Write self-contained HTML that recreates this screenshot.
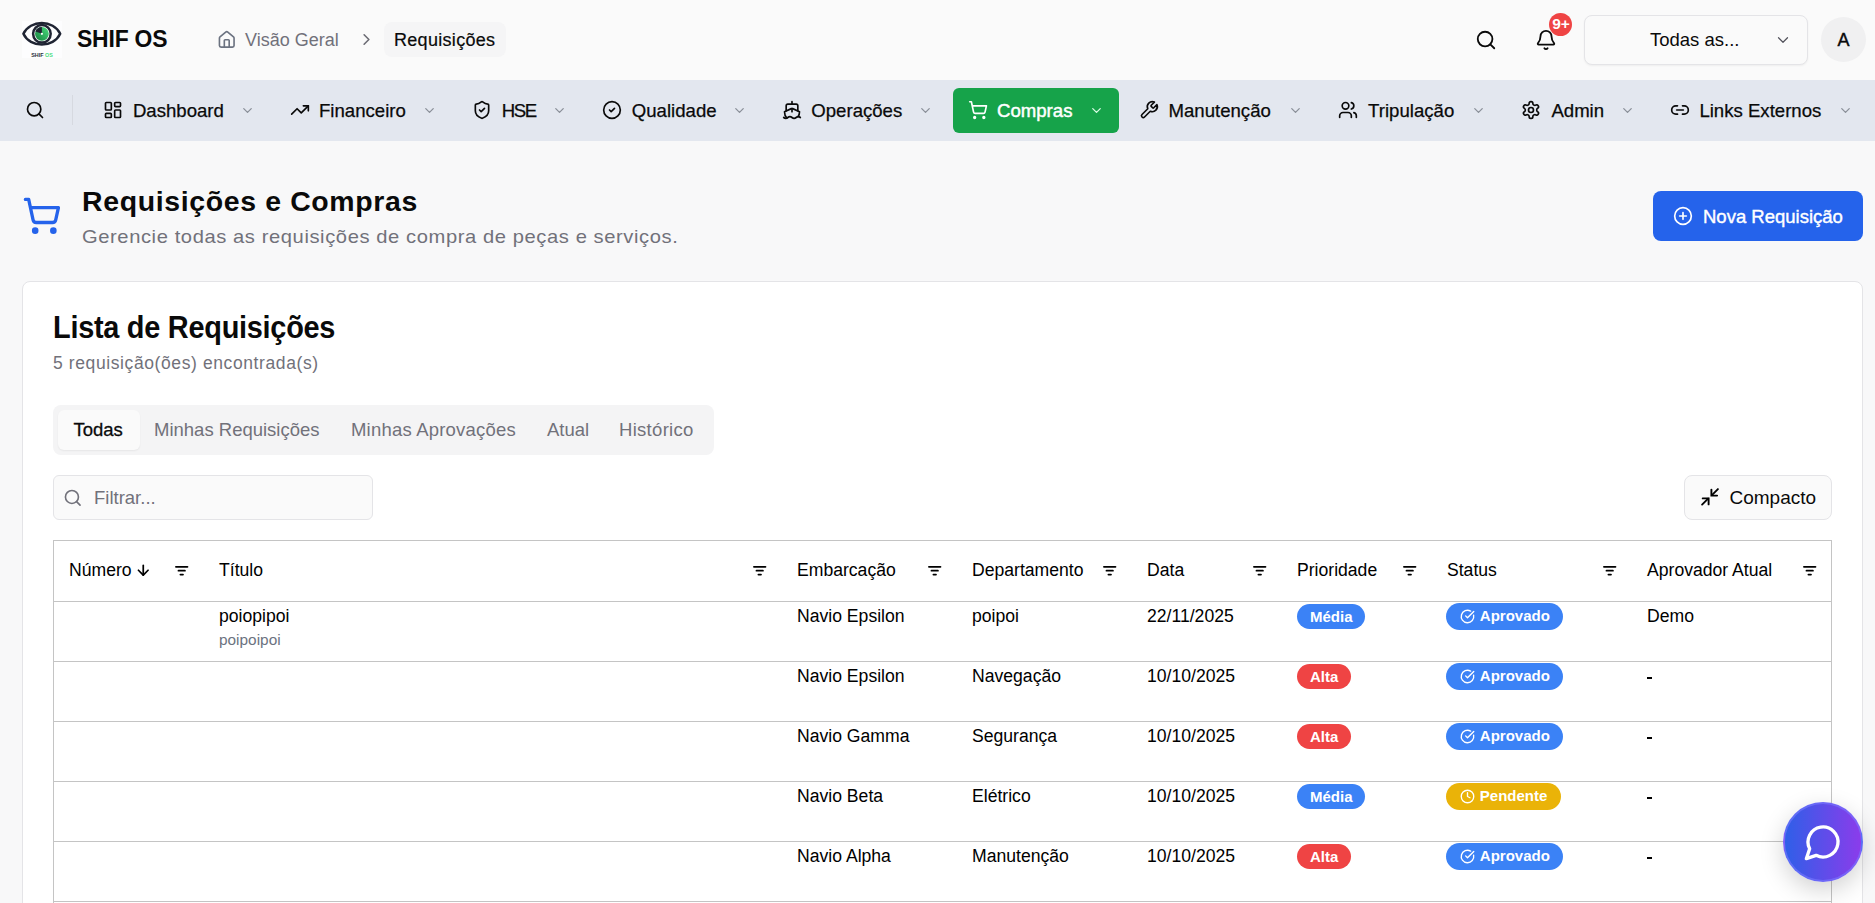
<!DOCTYPE html>
<html><head><meta charset="utf-8">
<style>
*{box-sizing:border-box;margin:0;padding:0}
html,body{width:1875px;height:903px;overflow:hidden;background:#f8f8f9;font-family:"Liberation Sans",sans-serif;color:#0a0a0a}
.a{position:absolute}
.t{position:absolute;white-space:nowrap;line-height:1}
svg{position:absolute;display:block;overflow:visible}
.ic{fill:none;stroke:#0a0a0a;stroke-width:2;stroke-linecap:round;stroke-linejoin:round}
.nav .t{font-size:18.6px;-webkit-text-stroke:0.25px #0a0a0a;color:#0a0a0a;top:101.5px}
.chev{fill:none;stroke:#8a8f98;stroke-width:2;stroke-linecap:round;stroke-linejoin:round}
.th{font-size:17.6px;color:#000}
.td{font-size:17.6px;color:#000}
.fl{fill:#000}
.badge{position:absolute;border-radius:14px;color:#fff;font-weight:700;font-size:15px;line-height:1}
</style></head><body>
<!-- HEADER -->
<div class="a" style="left:0;top:0;width:1875px;height:80px;background:#fafafa"></div>
<!-- logo -->
<div class="a" style="left:22px;top:21px;width:40px;height:37px;background:#fdfdfe"></div>
<svg style="left:22px;top:21px" width="40" height="37" viewBox="0 0 40 37">
  <defs><linearGradient id="gg" x1="1" y1="0" x2="0" y2="1"><stop offset="0" stop-color="#4ade80"/><stop offset="1" stop-color="#15803d"/></linearGradient></defs>
  <path d="M1.4 12.8 C8 -1.5 31.6 -1.5 38.2 12.8 C31.6 27.1 8 27.1 1.4 12.8 Z" fill="none" stroke="#1f2433" stroke-width="2.5" stroke-linejoin="round"/>
  <circle cx="19.9" cy="12.8" r="8.8" fill="none" stroke="#1f2433" stroke-width="2.5"/>
  <circle cx="19.9" cy="12.8" r="6.9" fill="url(#gg)"/>
  <path d="M19.9 12.8 L19.9 5.9 A6.9 6.9 0 0 0 13.4 10.4 Z" fill="#1f2433"/>
  <circle cx="19.9" cy="12.8" r="1.1" fill="#fff"/>
  <text x="9.2" y="35.8" font-family="Liberation Sans" font-weight="700" font-size="5.4" fill="#2a2f3a">SHIF <tspan fill="#4ade80">OS</tspan></text>
</svg>
<div class="t" style="left:76.5px;top:27.2px;font-size:24.5px;font-weight:700;letter-spacing:-0.2px;transform:scaleX(0.935);transform-origin:0 0">SHIF OS</div>
<!-- breadcrumb -->
<svg class="ic" style="left:217px;top:29.5px;stroke:#6b7280;stroke-width:2" width="19.5" height="19.5" viewBox="0 0 24 24"><path d="M15 21v-8a1 1 0 0 0-1-1h-4a1 1 0 0 0-1 1v8"/><path d="M3 10a2 2 0 0 1 .709-1.528l7-5.999a2 2 0 0 1 2.582 0l7 5.999A2 2 0 0 1 21 10v9a2 2 0 0 1-2 2H5a2 2 0 0 1-2-2z"/></svg>
<div class="t" style="left:245px;top:30.5px;font-size:18px;color:#71717a">Visão Geral</div>
<svg class="ic" style="left:357px;top:30px;stroke:#6b6b73" width="19" height="19" viewBox="0 0 24 24"><path d="m9 18 6-6-6-6"/></svg>
<div class="a" style="left:383.5px;top:22px;width:122px;height:35px;border-radius:8px;background:#f5f5f6"></div>
<div class="t" style="left:394px;top:30.5px;font-size:18px;color:#0a0a0a;letter-spacing:0.3px;-webkit-text-stroke:0.2px #0a0a0a">Requisições</div>
<!-- right header -->
<svg class="ic" style="left:1475px;top:29px" width="22" height="22" viewBox="0 0 24 24"><circle cx="11" cy="11" r="8"/><path d="m21 21-4.3-4.3"/></svg>
<svg class="ic" style="left:1535px;top:29px" width="22" height="22" viewBox="0 0 24 24"><path d="M10.268 21a2 2 0 0 0 3.464 0"/><path d="M3.262 15.326A1 1 0 0 0 4 17h16a1 1 0 0 0 .74-1.673C19.41 13.956 18 12.499 18 8A6 6 0 0 0 6 8c0 4.499-1.411 5.956-2.738 7.326"/></svg>
<div class="a" style="left:1549px;top:13px;width:23px;height:23px;border-radius:50%;background:#ef4444"></div>
<div class="t" style="left:1549.5px;top:16px;width:23px;text-align:center;font-size:15.5px;font-weight:700;color:#fff">9+</div>
<div class="a" style="left:1583.5px;top:15px;width:224px;height:50px;border-radius:8px;background:#fafafa;border:1px solid #e4e4e7;box-shadow:0 1px 2px rgba(0,0,0,0.05)"></div>
<div class="t" style="left:1650px;top:31px;font-size:18.5px">Todas as...</div>
<svg class="chev" style="left:1774px;top:31px;stroke:#52525b;stroke-width:1.6" width="18" height="18" viewBox="0 0 24 24"><path d="m6 9 6 6 6-6"/></svg>
<div class="a" style="left:1821px;top:17px;width:45px;height:45px;border-radius:50%;background:#f0f0f1"></div>
<div class="t" style="left:1821px;top:31px;width:45px;text-align:center;font-size:18px;-webkit-text-stroke:0.4px #0a0a0a">A</div>

<!-- NAV -->
<div class="a nav" style="left:0;top:79.5px;width:1875px;height:61px;background:#e3e7ef">
</div>
<div class="nav">
<svg class="ic" style="left:25px;top:100px" width="20" height="20" viewBox="0 0 24 24"><circle cx="11" cy="11" r="8"/><path d="m21 21-4.3-4.3"/></svg>
<div class="a" style="left:72px;top:95px;width:1px;height:30px;background:#d6d9e0"></div>
<svg class="ic" style="left:102.90px;top:100px;" width="20" height="20" viewBox="0 0 24 24"><rect width="7" height="9" x="3" y="3" rx="1"/><rect width="7" height="5" x="14" y="3" rx="1"/><rect width="7" height="9" x="14" y="12" rx="1"/><rect width="7" height="5" x="3" y="16" rx="1"/></svg>
<div class="t" style="left:132.9px;">Dashboard</div>
<svg class="chev" style="left:239.95px;top:102.9px;" width="15" height="15" viewBox="0 0 24 24"><path d="m6 9 6 6 6-6"/></svg>
<svg class="ic" style="left:289.85px;top:100px;" width="20" height="20" viewBox="0 0 24 24"><polyline points="22 7 13.5 15.5 8.5 10.5 2 17"/><polyline points="16 7 22 7 22 13"/></svg>
<div class="t" style="left:319.0px;">Financeiro</div>
<svg class="chev" style="left:422.00px;top:102.9px;" width="15" height="15" viewBox="0 0 24 24"><path d="m6 9 6 6 6-6"/></svg>
<svg class="ic" style="left:471.90px;top:100px;" width="20" height="20" viewBox="0 0 24 24"><path d="M20 13c0 5-3.5 7.5-7.66 8.95a1 1 0 0 1-.67-.01C7.5 20.5 4 18 4 13V6a1 1 0 0 1 1-1c2 0 4.5-1.2 6.24-2.72a1.17 1.17 0 0 1 1.52 0C14.51 3.81 17 5 19 5a1 1 0 0 1 1 1z"/><path d="m9 12 2 2 4-4"/></svg>
<div class="t" style="left:501.8px;letter-spacing:-1.4px">HSE</div>
<svg class="chev" style="left:552.00px;top:102.9px;" width="15" height="15" viewBox="0 0 24 24"><path d="m6 9 6 6 6-6"/></svg>
<svg class="ic" style="left:602.00px;top:100px;" width="20" height="20" viewBox="0 0 24 24"><circle cx="12" cy="12" r="10"/><path d="m9 12 2 2 4-4"/></svg>
<div class="t" style="left:631.8px;">Qualidade</div>
<svg class="chev" style="left:732.40px;top:102.9px;" width="15" height="15" viewBox="0 0 24 24"><path d="m6 9 6 6 6-6"/></svg>
<svg class="ic" style="left:782.25px;top:100px;" width="20" height="20" viewBox="0 0 24 24"><path d="M12 10.189V14"/><path d="M12 2v3"/><path d="M19 13V7a2 2 0 0 0-2-2H7a2 2 0 0 0-2 2v6"/><path d="M19.38 20A11.6 11.6 0 0 0 21 14l-8.188-3.639a2 2 0 0 0-1.624 0L3 14a11.6 11.6 0 0 0 2.81 7.76"/><path d="M2 21c.6.5 1.2 1 2.5 1 2.5 0 2.5-2 5-2 1.3 0 1.9.5 2.5 1s1.2 1 2.5 1c2.5 0 2.5-2 5-2 1.3 0 1.9.5 2.5 1"/></svg>
<div class="t" style="left:811.3px;">Operações</div>
<svg class="chev" style="left:918.20px;top:102.9px;" width="15" height="15" viewBox="0 0 24 24"><path d="m6 9 6 6 6-6"/></svg>
<div class="a" style="left:953px;top:88px;width:166px;height:44.5px;border-radius:6px;background:#16a34a"></div>
<svg class="ic" style="left:968.20px;top:100px;stroke:#fff;" width="20" height="20" viewBox="0 0 24 24"><circle cx="8" cy="21" r="1"/><circle cx="19" cy="21" r="1"/><path d="M2.05 2.05h2l2.66 12.42a2 2 0 0 0 2 1.58h9.78a2 2 0 0 0 1.95-1.57l1.65-7.430H5.12"/></svg>
<div class="t" style="left:997.0px;color:#fff;-webkit-text-stroke:0.45px #fff;">Compras</div>
<svg class="chev" style="left:1089.25px;top:102.9px;stroke:#dcfce7;" width="15" height="15" viewBox="0 0 24 24"><path d="m6 9 6 6 6-6"/></svg>
<svg class="ic" style="left:1139.45px;top:100px;" width="20" height="20" viewBox="0 0 24 24"><path d="M14.7 6.3a1 1 0 0 0 0 1.4l1.6 1.6a1 1 0 0 0 1.4 0l3.77-3.77a6 6 0 0 1-7.94 7.94l-6.91 6.91a2.12 2.12 0 0 1-3-3l6.91-6.91a6 6 0 0 1 7.94-7.94l-3.76 3.76z"/></svg>
<div class="t" style="left:1168.5px;">Manutenção</div>
<svg class="chev" style="left:1287.95px;top:102.9px;" width="15" height="15" viewBox="0 0 24 24"><path d="m6 9 6 6 6-6"/></svg>
<svg class="ic" style="left:1338.05px;top:100px;" width="20" height="20" viewBox="0 0 24 24"><path d="M16 21v-2a4 4 0 0 0-4-4H6a4 4 0 0 0-4 4v2"/><circle cx="9" cy="7" r="4"/><path d="M22 21v-2a4 4 0 0 0-3-3.87"/><path d="M16 3.13a4 4 0 0 1 0 7.75"/></svg>
<div class="t" style="left:1368.1px;">Tripulação</div>
<svg class="chev" style="left:1471.25px;top:102.9px;" width="15" height="15" viewBox="0 0 24 24"><path d="m6 9 6 6 6-6"/></svg>
<svg class="ic" style="left:1520.80px;top:100px;" width="20" height="20" viewBox="0 0 24 24"><path d="M12.22 2h-.44a2 2 0 0 0-2 2v.18a2 2 0 0 1-1 1.73l-.43.25a2 2 0 0 1-2 0l-.15-.08a2 2 0 0 0-2.73.73l-.22.38a2 2 0 0 0 .73 2.73l.15.1a2 2 0 0 1 1 1.72v.51a2 2 0 0 1-1 1.74l-.15.09a2 2 0 0 0-.73 2.73l.22.38a2 2 0 0 0 2.73.73l.15-.08a2 2 0 0 1 2 0l.43.25a2 2 0 0 1 1 1.73V20a2 2 0 0 0 2 2h.44a2 2 0 0 0 2-2v-.18a2 2 0 0 1 1-1.73l.43-.25a2 2 0 0 1 2 0l.15.08a2 2 0 0 0 2.73-.73l.22-.39a2 2 0 0 0-.73-2.73l-.15-.08a2 2 0 0 1-1-1.74v-.5a2 2 0 0 1 1-1.74l.15-.09a2 2 0 0 0 .73-2.73l-.22-.38a2 2 0 0 0-2.73-.73l-.15.08a2 2 0 0 1-2 0l-.43-.25a2 2 0 0 1-1-1.73V4a2 2 0 0 0-2-2z"/><circle cx="12" cy="12" r="3"/></svg>
<div class="t" style="left:1551.4px;">Admin</div>
<svg class="chev" style="left:1620.00px;top:102.9px;" width="15" height="15" viewBox="0 0 24 24"><path d="m6 9 6 6 6-6"/></svg>
<svg class="ic" style="left:1670.00px;top:100px;" width="20" height="20" viewBox="0 0 24 24"><path d="M9 17H7A5 5 0 0 1 7 7h2"/><path d="M15 7h2a5 5 0 1 1 0 10h-2"/><line x1="8" x2="16" y1="12" y2="12"/></svg>
<div class="t" style="left:1699.4px;">Links Externos</div>
<svg class="chev" style="left:1838.00px;top:102.9px;" width="15" height="15" viewBox="0 0 24 24"><path d="m6 9 6 6 6-6"/></svg>
</div>

<!-- PAGE HEADER -->
<svg class="ic" style="left:22.3px;top:195.8px;stroke:#2563eb;stroke-width:2" width="39.6" height="39.6" viewBox="0 0 24 24"><circle cx="8" cy="21" r="1"/><circle cx="19" cy="21" r="1"/><path d="M2.05 2.05h2l2.66 12.42a2 2 0 0 0 2 1.58h9.78a2 2 0 0 0 1.95-1.57l1.65-7.43H5.12"/></svg>
<div class="t" style="left:81.5px;top:188.5px;font-size:27px;font-weight:700;letter-spacing:0.6px;transform:scaleX(1.054);transform-origin:0 0">Requisições e Compras</div>
<div class="t" style="left:82px;top:226.5px;font-size:19px;color:#71717a;letter-spacing:0.55px;transform:scaleX(1.061);transform-origin:0 0">Gerencie todas as requisições de compra de peças e serviços.</div>

<div class="a" style="left:1653px;top:191px;width:210px;height:50px;border-radius:8px;background:#2563eb"></div>
<svg class="ic" style="left:1672.8px;top:206px;stroke:#fff;stroke-width:2" width="20" height="20" viewBox="0 0 24 24"><circle cx="12" cy="12" r="10"/><path d="M8 12h8"/><path d="M12 8v8"/></svg>
<div class="t" style="left:1703px;top:208px;font-size:18.5px;color:#fff;-webkit-text-stroke:0.4px #fff">Nova Requisição</div>

<!-- CARD -->
<div class="a" style="left:22px;top:281px;width:1841px;height:700px;border-radius:8px;background:#fff;border:1px solid #e4e4e7"></div>
<div class="t" style="left:52.5px;top:312px;font-size:31.5px;font-weight:700;letter-spacing:-0.3px;transform:scaleX(0.918);transform-origin:0 0">Lista de Requisições</div>
<div class="t" style="left:53px;top:355px;font-size:17.5px;color:#71717a;letter-spacing:0.6px">5 requisição(ões) encontrada(s)</div>

<!-- tabs -->
<div class="a" style="left:53px;top:404.5px;width:661px;height:50.5px;border-radius:8px;background:#f4f4f5"></div>
<div class="a" style="left:57.5px;top:409.5px;width:82px;height:40px;border-radius:6px;background:#fafafa;box-shadow:0 1px 2px rgba(0,0,0,0.06)"></div>
<div class="t" style="left:73.5px;top:420.5px;font-size:18.5px;-webkit-text-stroke:0.3px #0a0a0a">Todas</div>
<div class="t" style="left:154px;top:420.5px;font-size:18.5px;color:#71717a">Minhas Requisições</div>
<div class="t" style="left:351px;top:420.5px;font-size:18.5px;color:#71717a;letter-spacing:0.2px">Minhas Aprovações</div>
<div class="t" style="left:547px;top:420.5px;font-size:18.5px;color:#71717a">Atual</div>
<div class="t" style="left:619px;top:420.5px;font-size:18.5px;color:#71717a;letter-spacing:0.3px">Histórico</div>

<!-- filter -->
<div class="a" style="left:53px;top:475px;width:320px;height:45px;border-radius:6px;background:#fafafa;border:1px solid #e4e4e7"></div>
<svg class="ic" style="left:63px;top:487.5px;stroke:#71717a" width="19.5" height="19.5" viewBox="0 0 24 24"><circle cx="11" cy="11" r="8"/><path d="m21 21-4.3-4.3"/></svg>
<div class="t" style="left:94px;top:489px;font-size:18.5px;color:#71717a">Filtrar...</div>

<div class="a" style="left:1684px;top:475px;width:148px;height:45px;border-radius:8px;background:#fafafa;border:1px solid #e4e4e7"></div>
<svg style="left:1695px;top:482px" width="30" height="30" viewBox="0 0 30 30"><g fill="none" stroke="#000" stroke-width="1.9" stroke-linecap="round" stroke-linejoin="miter"><path d="M22.9 7.1 16.9 13.1"/><path d="M16.4 7.6V13.6H22.1"/><path d="M7.1 22.6 13.1 16.6"/><path d="M7.7 16.4H13.6V22.4"/></g></svg>
<div class="t" style="left:1729.5px;top:488px;font-size:19px">Compacto</div>

<!-- TABLE -->
<div class="a" style="left:53px;top:540px;width:1779px;height:400px;border:1px solid #c4c4c4;background:#fff"></div>
<div class="a" style="left:54px;top:601px;width:1777px;height:1px;background:#c4c4c4"></div>
<div class="a" style="left:54px;top:661px;width:1777px;height:1px;background:#c4c4c4"></div>
<div class="a" style="left:54px;top:721px;width:1777px;height:1px;background:#c4c4c4"></div>
<div class="a" style="left:54px;top:781px;width:1777px;height:1px;background:#c4c4c4"></div>
<div class="a" style="left:54px;top:841px;width:1777px;height:1px;background:#c4c4c4"></div>
<div class="a" style="left:54px;top:901px;width:1777px;height:1px;background:#c4c4c4"></div>

<div class="t th" style="top:562px;left:69px">Número</div>
<svg class="ic" style="left:135.2px;top:562.2px;stroke:#000;stroke-width:2.5" width="16.5" height="16.5" viewBox="0 0 24 24"><path d="M12 5v14"/><path d="m19 12-7 7-7-7"/></svg>
<div class="t th" style="top:562px;left:219px">Título</div>
<div class="t th" style="top:562px;left:797px">Embarcação</div>
<div class="t th" style="top:562px;left:972px">Departamento</div>
<div class="t th" style="top:562px;left:1147px">Data</div>
<div class="t th" style="top:562px;left:1297px">Prioridade</div>
<div class="t th" style="top:562px;left:1447px">Status</div>
<div class="t th" style="top:562px;left:1647px">Aprovador Atual</div>
<!-- filter icons -->
<svg class="ic" style="left:173.9px;top:562.7px;stroke:#000;stroke-width:2.8" width="15.4" height="15.4" viewBox="0 0 24 24"><path d="M3 6h18"/><path d="M7 12h10"/><path d="M10 18h4"/></svg>
<svg class="ic" style="left:751.5px;top:562.7px;stroke:#000;stroke-width:2.8" width="15.4" height="15.4" viewBox="0 0 24 24"><path d="M3 6h18"/><path d="M7 12h10"/><path d="M10 18h4"/></svg>
<svg class="ic" style="left:926.6px;top:562.7px;stroke:#000;stroke-width:2.8" width="15.4" height="15.4" viewBox="0 0 24 24"><path d="M3 6h18"/><path d="M7 12h10"/><path d="M10 18h4"/></svg>
<svg class="ic" style="left:1101.6px;top:562.7px;stroke:#000;stroke-width:2.8" width="15.4" height="15.4" viewBox="0 0 24 24"><path d="M3 6h18"/><path d="M7 12h10"/><path d="M10 18h4"/></svg>
<svg class="ic" style="left:1251.6px;top:562.7px;stroke:#000;stroke-width:2.8" width="15.4" height="15.4" viewBox="0 0 24 24"><path d="M3 6h18"/><path d="M7 12h10"/><path d="M10 18h4"/></svg>
<svg class="ic" style="left:1401.6px;top:562.7px;stroke:#000;stroke-width:2.8" width="15.4" height="15.4" viewBox="0 0 24 24"><path d="M3 6h18"/><path d="M7 12h10"/><path d="M10 18h4"/></svg>
<svg class="ic" style="left:1601.6px;top:562.7px;stroke:#000;stroke-width:2.8" width="15.4" height="15.4" viewBox="0 0 24 24"><path d="M3 6h18"/><path d="M7 12h10"/><path d="M10 18h4"/></svg>
<svg class="ic" style="left:1801.7px;top:562.7px;stroke:#000;stroke-width:2.8" width="15.4" height="15.4" viewBox="0 0 24 24"><path d="M3 6h18"/><path d="M7 12h10"/><path d="M10 18h4"/></svg>

<!-- rows -->
<div class="t td" style="left:219px;top:608px">poiopipoi</div>
<div class="t" style="left:219px;top:632px;font-size:15.4px;color:#6b7280">poipoipoi</div>

<div class="t td" style="left:797px;top:608px">Navio Epsilon</div>
<div class="t td" style="left:972px;top:608px">poipoi</div>
<div class="t td" style="left:1147px;top:608px">22/11/2025</div>
<div class="t td" style="left:1647px;top:608px">Demo</div>

<div class="t td" style="left:797px;top:668px">Navio Epsilon</div>
<div class="t td" style="left:972px;top:668px">Navegação</div>
<div class="t td" style="left:1147px;top:668px">10/10/2025</div>
<div class="a" style="left:1646.5px;top:677px;width:5.7px;height:2px;background:#000"></div>

<div class="t td" style="left:797px;top:728px">Navio Gamma</div>
<div class="t td" style="left:972px;top:728px">Segurança</div>
<div class="t td" style="left:1147px;top:728px">10/10/2025</div>
<div class="a" style="left:1646.5px;top:737px;width:5.7px;height:2px;background:#000"></div>

<div class="t td" style="left:797px;top:788px">Navio Beta</div>
<div class="t td" style="left:972px;top:788px">Elétrico</div>
<div class="t td" style="left:1147px;top:788px">10/10/2025</div>
<div class="a" style="left:1646.5px;top:797px;width:5.7px;height:2px;background:#000"></div>

<div class="t td" style="left:797px;top:848px">Navio Alpha</div>
<div class="t td" style="left:972px;top:848px">Manutenção</div>
<div class="t td" style="left:1147px;top:848px">10/10/2025</div>
<div class="a" style="left:1646.5px;top:857px;width:5.7px;height:2px;background:#000"></div>

<!-- badges -->
<div class="badge" style="left:1297px;top:604px;width:68px;height:25px;background:#3b82f6"><span class="t" style="left:13px;top:4.5px">Média</span></div>
<div class="badge" style="left:1446px;top:603px;width:117px;height:27px;background:#3b82f6"><svg class="ic" style="left:13.5px;top:6px;stroke:#fff;stroke-width:2.2" width="15" height="15" viewBox="0 0 24 24"><path d="M21.801 10A10 10 0 1 1 17 3.335"/><path d="m9 11 3 3L22 4"/></svg><span class="t" style="left:33.8px;top:4.5px">Aprovado</span></div>

<div class="badge" style="left:1297px;top:664px;width:54px;height:25px;background:#ef4444"><span class="t" style="left:13px;top:4.5px">Alta</span></div>
<div class="badge" style="left:1446px;top:663px;width:117px;height:27px;background:#3b82f6"><svg class="ic" style="left:13.5px;top:6px;stroke:#fff;stroke-width:2.2" width="15" height="15" viewBox="0 0 24 24"><path d="M21.801 10A10 10 0 1 1 17 3.335"/><path d="m9 11 3 3L22 4"/></svg><span class="t" style="left:33.8px;top:4.5px">Aprovado</span></div>

<div class="badge" style="left:1297px;top:724px;width:54px;height:25px;background:#ef4444"><span class="t" style="left:13px;top:4.5px">Alta</span></div>
<div class="badge" style="left:1446px;top:723px;width:117px;height:27px;background:#3b82f6"><svg class="ic" style="left:13.5px;top:6px;stroke:#fff;stroke-width:2.2" width="15" height="15" viewBox="0 0 24 24"><path d="M21.801 10A10 10 0 1 1 17 3.335"/><path d="m9 11 3 3L22 4"/></svg><span class="t" style="left:33.8px;top:4.5px">Aprovado</span></div>

<div class="badge" style="left:1297px;top:784px;width:68px;height:25px;background:#3b82f6"><span class="t" style="left:13px;top:4.5px">Média</span></div>
<div class="badge" style="left:1446px;top:783px;width:115px;height:27px;background:#eab308"><svg class="ic" style="left:13.5px;top:6px;stroke:#fff;stroke-width:2.2" width="15" height="15" viewBox="0 0 24 24"><circle cx="12" cy="12" r="10"/><polyline points="12 6 12 12 16 14"/></svg><span class="t" style="left:33.8px;top:4.5px">Pendente</span></div>

<div class="badge" style="left:1297px;top:844px;width:54px;height:25px;background:#ef4444"><span class="t" style="left:13px;top:4.5px">Alta</span></div>
<div class="badge" style="left:1446px;top:843px;width:117px;height:27px;background:#3b82f6"><svg class="ic" style="left:13.5px;top:6px;stroke:#fff;stroke-width:2.2" width="15" height="15" viewBox="0 0 24 24"><path d="M21.801 10A10 10 0 1 1 17 3.335"/><path d="m9 11 3 3L22 4"/></svg><span class="t" style="left:33.8px;top:4.5px">Aprovado</span></div>

<!-- FAB -->
<div class="a" style="left:1782.5px;top:801.5px;width:80px;height:80px;border-radius:50%;background:linear-gradient(90deg,#2f5fe8,#8b3ceb);box-shadow:0 8px 24px rgba(0,0,0,0.18);border:2px solid rgba(120,120,255,0.6)"></div>
<svg class="ic" style="left:1803px;top:822px;stroke:#fff;stroke-width:2" width="40" height="40" viewBox="0 0 24 24"><path d="M7.9 20A9 9 0 1 0 4 16.1L2 22Z"/></svg>
</body></html>
